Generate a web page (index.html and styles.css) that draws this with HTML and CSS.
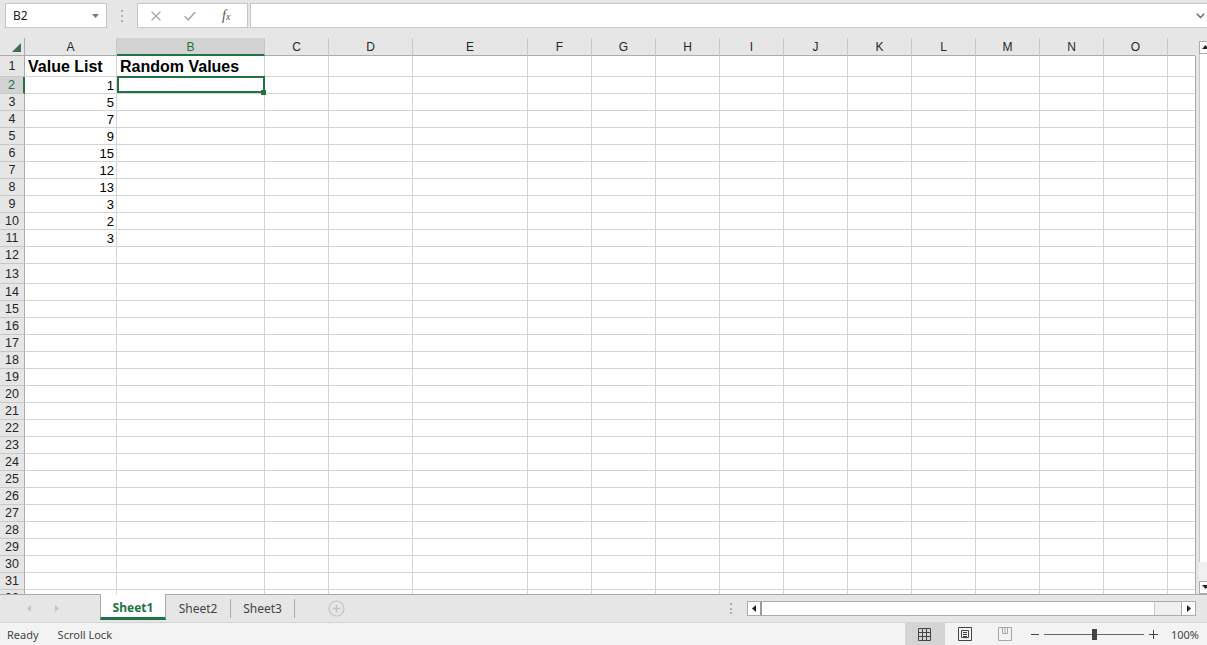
FILE: index.html
```html
<!DOCTYPE html>
<html lang="en">
<head>
    <meta charset="UTF-8">
    <meta name="viewport" content="width=device-width, initial-scale=1.0">
    <title>Book1 - Excel</title>
    <link rel="stylesheet" href="styles.css">
</head>
<body>
    <div class="app">
        <!-- Name box + formula bar -->
        <div class="formula-bar">
            <div class="name-box">
                <span>B2</span>
                <svg width="7" height="4" viewBox="0 0 7 4"><path d="M0 0h7L3.5 4z" fill="#7a7a7a"/></svg>
            </div>
            <div class="grip"><i></i><i></i><i></i></div>
            <div class="fx-box">
                <svg class="fx-cancel" width="10" height="10" viewBox="0 0 10 10"><path d="M0.5 0.5l9 9M9.5 0.5l-9 9" stroke="#a8a8a8" stroke-width="1.2" fill="none"/></svg>
                <svg class="fx-enter" width="12" height="10" viewBox="0 0 12 10"><path d="M0.7 5.2l3.6 3.6L11.3 1" stroke="#a8a8a8" stroke-width="1.6" fill="none"/></svg>
                <span class="fx"><i>f</i><i class="fx-x">x</i></span>
            </div>
            <div class="formula-input">
                <svg width="9" height="6" viewBox="0 0 9 6"><path d="M0.8 0.8l3.7 3.7 3.7-3.7" stroke="#6a6a6a" stroke-width="1.5" fill="none"/></svg>
            </div>
        </div>

        <!-- Worksheet -->
        <div class="sheet-area">
            <div class="grid-view">
                <div class="grid" id="grid">
                    <!-- Cells will be added by JavaScript -->
                </div>
            </div>
            <div class="vscroll">
                <div class="vs-btn">
                    <svg width="7" height="4" viewBox="0 0 7 4"><path d="M0 4h7L3.5 0z" fill="#222"/></svg>
                </div>
                <div class="vs-thumb"></div>
                <div class="vs-track"></div>
                <div class="vs-btn">
                    <svg width="7" height="4" viewBox="0 0 7 4"><path d="M0 0h7L3.5 4z" fill="#222"/></svg>
                </div>
            </div>
        </div>

        <!-- Sheet tabs + horizontal scroll -->
        <div class="tab-bar">
            <div class="tab-nav">
                <svg class="nav-prev" width="4" height="7" viewBox="0 0 4 7"><path d="M4 0v7L0 3.5z" fill="#c4c4c4"/></svg>
                <svg class="nav-next" width="4" height="7" viewBox="0 0 4 7"><path d="M0 0v7l4-3.5z" fill="#c4c4c4"/></svg>
            </div>
            <div class="tab active">Sheet1</div>
            <div class="tab">Sheet2</div>
            <span class="tab-sep"></span>
            <div class="tab short">Sheet3</div>
            <span class="tab-sep"></span>
            <svg class="add-sheet" width="17" height="17" viewBox="0 0 17 17">
                <circle cx="8.5" cy="8.5" r="7.5" fill="none" stroke="#c4c4c4" stroke-width="1.2"/>
                <path d="M8.5 4.5v8M4.5 8.5h8" stroke="#c4c4c4" stroke-width="1.4"/>
            </svg>

            <div class="hs-area">
                <div class="grip small"><i></i><i></i><i></i></div>
                <div class="hscroll">
                    <div class="hs-btn left">
                        <svg width="4" height="7" viewBox="0 0 4 7"><path d="M4 0v7L0 3.5z" fill="#222"/></svg>
                    </div>
                    <div class="hs-thumb"></div>
                    <div class="hs-track"></div>
                    <div class="hs-btn right">
                        <svg width="4" height="7" viewBox="0 0 4 7"><path d="M0 0v7l4-3.5z" fill="#222"/></svg>
                    </div>
                </div>
            </div>
        </div>

        <!-- Status bar -->
        <div class="status-bar">
            <span class="status-item">Ready</span>
            <span class="status-item">Scroll Lock</span>

            <div class="status-right">
                <div class="view-btn active">
                    <svg width="13" height="13" viewBox="0 0 13 13"><path d="M0.5 0.5h12v12h-12zM4.5 0.5v12M8.5 0.5v12M0.5 4.5h12M0.5 8.5h12" stroke="#444" fill="none"/></svg>
                </div>
                <div class="view-btn">
                    <svg width="14" height="14" viewBox="0 0 14 14"><path d="M0.5 0.5h13v13h-13zM3.5 3.5h7v7h-7zM5 5.5h4M5 7.5h4M5 9.5h4" stroke="#444" fill="none"/></svg>
                </div>
                <div class="view-btn">
                    <svg width="14" height="14" viewBox="0 0 14 14"><path d="M0.5 0.5h13v13h-13zM4.5 0.5v6h5v-6M7 0.5v6" stroke="#a8a8a8" fill="none"/></svg>
                </div>
                <div class="zoom">
                    <span class="zoom-minus"></span>
                    <div class="zoom-slider"><span class="zoom-thumb"></span></div>
                    <svg class="zoom-plus" width="9" height="9" viewBox="0 0 9 9"><path d="M4.5 0v9M0 4.5h9" stroke="#444"/></svg>
                    <span class="zoom-level">100%</span>
                </div>
            </div>
        </div>
    </div>

    <script>
        // Sheet data
        const columns = ['A', 'B', 'C', 'D', 'E', 'F', 'G', 'H', 'I', 'J', 'K', 'L', 'M', 'N', 'O', 'P'];
        const valueList = [1, 5, 7, 9, 15, 12, 13, 3, 2, 3];
        const totalRows = 32;
        const activeCol = 'B';
        const activeRow = 2;
        // last column is only partly visible, its letter sits under the scrollbar
        const lastCol = columns[columns.length - 1];

        const grid = document.getElementById('grid');

        function addCell(className, text) {
            const cell = document.createElement('div');
            cell.className = className;
            if (text !== undefined) {
                cell.textContent = text;
            }
            grid.appendChild(cell);
            return cell;
        }

        // Select-all corner
        addCell('corner').innerHTML =
            '<svg width="9" height="9" viewBox="0 0 9 9"><path d="M9 0v9H0z" fill="#3f6f4e"/></svg>';

        // Column headers
        columns.forEach(col => {
            addCell(col === activeCol ? 'col-head active' : 'col-head', col === lastCol ? '' : col);
        });

        // Rows
        for (let r = 1; r <= totalRows; r++) {
            addCell(r === activeRow ? 'row-head active' : 'row-head', r);

            columns.forEach(col => {
                let className = 'cell';
                let text;

                if (r === 1 && col === 'A') {
                    className += ' title';
                    text = 'Value List';
                } else if (r === 1 && col === 'B') {
                    className += ' title';
                    text = 'Random Values';
                } else if (col === 'A' && valueList[r - 2] !== undefined) {
                    className += ' number';
                    text = valueList[r - 2];
                }

                if (r === activeRow && col === activeCol) {
                    className += ' selected';
                }

                addCell(className, text);
            });
        }
    </script>
</body>
</html>
```

FILE: styles.css
```css
* {
    box-sizing: border-box;
    margin: 0;
    padding: 0;
}

body {
    font-family: 'Noto Sans', sans-serif;
    background-color: #e6e6e6;
    overflow: hidden;
}

.app {
    width: 1207px;
    height: 645px;
    display: flex;
    flex-direction: column;
    overflow: hidden;
}

/* ---------- formula bar ---------- */

.formula-bar {
    height: 38px;
    flex: none;
    display: flex;
    align-items: flex-start;
    padding-top: 3px;
    background-color: #e6e6e6;
}

.name-box {
    width: 102px;
    height: 25px;
    margin-left: 5px;
    padding: 0 7px;
    display: flex;
    align-items: center;
    justify-content: space-between;
    background-color: #fff;
    border: 1px solid #c6c6c6;
    font-size: 12px;
    color: #222;
}

.grip {
    width: 30px;
    height: 25px;
    display: flex;
    flex-direction: column;
    align-items: center;
    justify-content: center;
    gap: 3px;
}

.grip i {
    display: block;
    width: 2px;
    height: 2px;
    background-color: #b0b0b0;
}

.fx-box {
    width: 111px;
    height: 25px;
    display: flex;
    align-items: center;
    background-color: #fff;
    border: 1px solid #c6c6c6;
}

.fx-cancel {
    margin-left: 13px;
}

.fx-enter {
    margin-left: 23px;
}

.fx {
    margin-left: 26px;
    font-family: 'Liberation Serif', serif;
    font-size: 14px;
    color: #555;
    line-height: 1;
}

.fx-x {
    font-size: 10px;
}

.formula-input {
    flex: 1;
    height: 25px;
    margin-left: 2px;
    margin-right: -2px;
    padding-right: 3px;
    display: flex;
    align-items: center;
    justify-content: flex-end;
    background-color: #fff;
    border: 1px solid #c6c6c6;
}

/* ---------- worksheet ---------- */

.sheet-area {
    height: 556px;
    flex: none;
    display: flex;
    background-color: #fff;
}

.grid-view {
    width: 1195px;
    height: 100%;
    overflow: hidden;
}

.grid {
    display: grid;
    width: max-content;
    grid-template-columns: 25px 92px 148px 64px 84px 115px repeat(11, 64px);
    grid-template-rows: 18px 21px repeat(11, 17px) 20px repeat(19, 17px);
    font-family: 'Liberation Sans', Arial, sans-serif;
}

.corner,
.col-head,
.row-head {
    background-color: #e6e6e6;
    color: #262626;
}

.corner {
    display: flex;
    align-items: flex-end;
    justify-content: flex-end;
    padding: 0 3px 3px 0;
    border-right: 1px solid #ababab;
    border-bottom: 1px solid #ababab;
}

.col-head {
    padding-top: 2px;
    text-align: center;
    font-size: 12px;
    line-height: 15px;
    border-right: 1px solid #c8c8c8;
    border-bottom: 1px solid #ababab;
}

.col-head.active {
    background-color: #d2d2d2;
    color: #217346;
    border-bottom: 2px solid #217346;
}

.row-head {
    text-align: center;
    font-size: 12.5px;
    display: flex;
    align-items: center;
    justify-content: center;
    border-right: 1px solid #ababab;
    border-bottom: 1px solid #c8c8c8;
}

.row-head.active {
    background-color: #d2d2d2;
    color: #217346;
    border-right: 2px solid #217346;
}

.cell {
    padding: 0 3px;
    font-size: 13px;
    color: #000;
    display: flex;
    align-items: center;
    white-space: nowrap;
    border-right: 1px solid #d4d4d4;
    border-bottom: 1px solid #d4d4d4;
}

.cell.title {
    padding-top: 2px;
    font-size: 16px;
    font-weight: bold;
}

.cell.number {
    justify-content: flex-end;
    padding-right: 2px;
}

.cell.selected {
    position: relative;
    z-index: 1;
}

.cell.selected::after {
    content: '';
    position: absolute;
    left: 0;
    top: -1px;
    right: -1px;
    bottom: 0;
    border: 2px solid #217346;
}

.cell.selected::before {
    content: '';
    position: absolute;
    right: -2px;
    bottom: -2px;
    width: 5px;
    height: 5px;
    background-color: #217346;
    z-index: 2;
}

/* vertical scrollbar */
.vscroll {
    width: 12px;
    display: flex;
    flex-direction: column;
    padding: 3px 0 0 4px;
    overflow: hidden;
    background: linear-gradient(#ababab, #ababab) no-repeat 0 18px / 1px 100%, #e6e6e6;
}

.vs-btn {
    width: 12px;
    height: 13px;
    flex: none;
    padding: 3px 0 0 2px;
    background-color: #fff;
    border: 1px solid #ababab;
}

.vs-btn svg {
    display: block;
}

.vs-thumb {
    height: 508px;
    flex: none;
    background-color: #fff;
    border-left: 1px solid #c6c6c6;
}

.vs-track {
    flex: 1;
    background-color: #f0f0f0;
}

/* ---------- sheet tabs ---------- */

.tab-bar {
    height: 28px;
    flex: none;
    display: flex;
    align-items: center;
    background-color: #e6e6e6;
    border-top: 1px solid #ababab;
}

.tab-nav {
    width: 100px;
    display: flex;
    align-items: center;
}

.nav-prev {
    margin-left: 27px;
}

.nav-next {
    margin-left: 24px;
}

.tab {
    width: 64px;
    height: 100%;
    display: flex;
    align-items: center;
    justify-content: center;
    font-size: 12px;
    color: #444;
}

.tab.short {
    width: 63px;
}

.tab.active {
    width: 66px;
    height: 26px;
    align-self: flex-start;
    margin-top: -1px;
    padding-top: 4px;
    background-color: #fff;
    border-left: 1px solid #ababab;
    border-right: 1px solid #ababab;
    border-bottom: 3px solid #217346;
    font-weight: bold;
    color: #217346;
}

.tab-sep {
    width: 1px;
    height: 19px;
    background-color: #ababab;
}

.add-sheet {
    margin-left: 33px;
}

.hs-area {
    margin-left: auto;
    margin-right: 11px;
    display: flex;
    align-items: center;
}

.grip.small {
    width: 16px;
    height: 14px;
    margin-right: 8px;
    gap: 2.5px;
}

.hscroll {
    width: 449px;
    height: 15px;
    display: flex;
    background-color: #f0f0f0;
    border: 1px solid #ababab;
}

.hs-btn {
    width: 14px;
    display: flex;
    align-items: center;
    justify-content: center;
    background-color: #fff;
}

.hs-btn.left {
    border-right: 2px solid #9a9a9a;
}

.hs-btn.right {
    border-left: 1px solid #ababab;
}

.hs-thumb {
    width: 393px;
    background-color: #fff;
    border-right: 1px solid #c6c6c6;
}

.hs-track {
    flex: 1;
}

/* ---------- status bar ---------- */

.status-bar {
    height: 23px;
    flex: none;
    display: flex;
    align-items: stretch;
    background-color: #f3f3f3;
    border-top: 1px solid #d4d4d4;
    font-size: 11px;
    color: #444;
}

.status-item {
    display: flex;
    align-items: center;
    margin-left: 7px;
}

.status-item + .status-item {
    margin-left: 19px;
}

.status-right {
    margin-left: auto;
    display: flex;
    align-items: stretch;
}

.view-btn {
    width: 40px;
    display: flex;
    align-items: center;
    justify-content: center;
}

.view-btn.active {
    background-color: #d4d4d4;
}

.zoom {
    display: flex;
    align-items: center;
    padding-right: 8px;
}

.zoom-minus {
    width: 8px;
    height: 1px;
    margin-left: 6px;
    background-color: #444;
}

.zoom-slider {
    position: relative;
    width: 100px;
    height: 1px;
    margin-left: 5px;
    background-color: #666;
}

.zoom-thumb {
    position: absolute;
    left: 48px;
    top: -5px;
    width: 5px;
    height: 11px;
    background-color: #444;
}

.zoom-plus {
    margin-left: 5px;
}

.zoom-level {
    margin-left: 13px;
}
```
